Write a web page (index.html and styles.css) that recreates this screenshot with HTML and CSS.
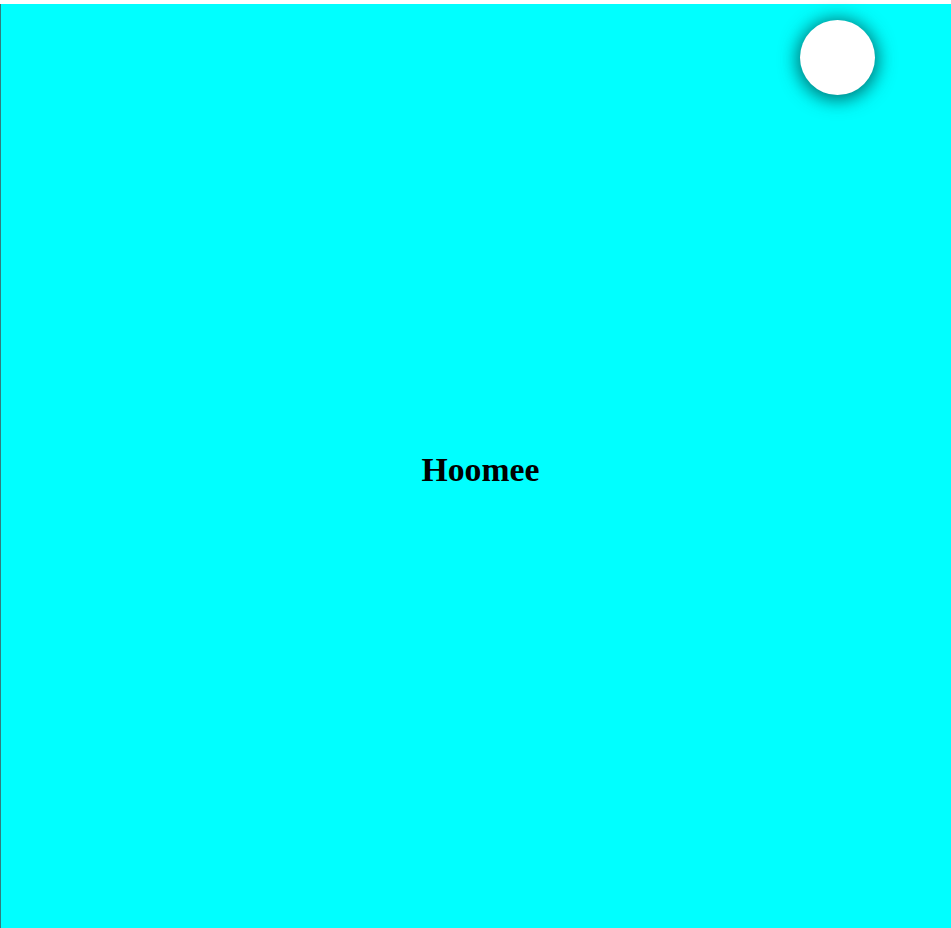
FILE: index.html
```html
<!DOCTYPE html>
<html>
<head>
<meta charset="utf-8">
<link rel="stylesheet" href="styles.css">
</head>
<body>
<div class="screen">
  <h1 class="title">Hoomee</h1>
  <div class="avatar"></div>
</div>
</body>
</html>
```
FILE: styles.css
```css
html, body {
  margin: 0;
  padding: 0;
  background: #ffffff;
  overflow: hidden;
}
body {
  padding-top: 4px;
}
.screen {
  position: relative;
  min-height: 932px;
  background: #00ffff;
  border-left: 1px solid #2f7f7f;
  display: flex;
  align-items: center;
  justify-content: center;
  padding-left: 9px;
  box-sizing: border-box;
}
.title {
  margin: 0;
  font-family: "Liberation Serif", "Times New Roman", serif;
  font-size: 33.7px;
  font-weight: bold;
  color: #000;
}
.avatar {
  position: absolute;
  top: 16px;
  left: 799px;
  width: 75px;
  height: 75px;
  border-radius: 50%;
  background: #fff;
  box-shadow: 0 2px 18px 3px rgba(0, 90, 90, 0.85);
}
```
